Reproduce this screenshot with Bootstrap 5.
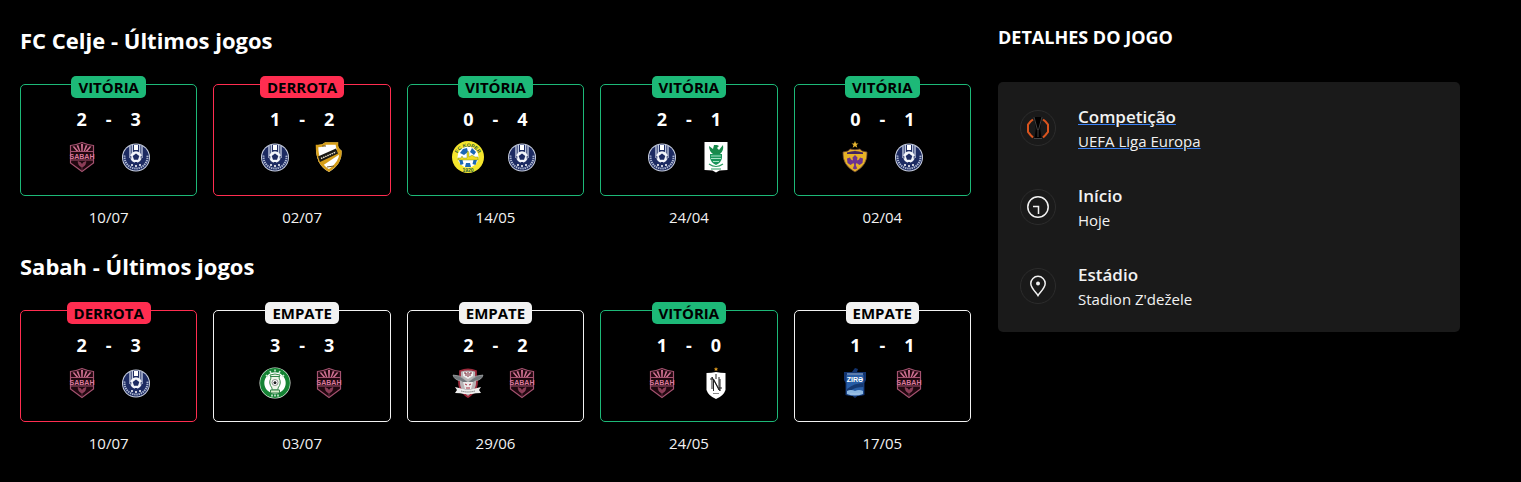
<!DOCTYPE html>
<html lang="pt" data-bs-theme="dark">
<head>
<meta charset="utf-8">
<meta name="viewport" content="width=device-width, initial-scale=1">
<title>FC Celje - Sabah</title>
<link href="https://cdn.jsdelivr.net/npm/bootstrap@5.3.0/dist/css/bootstrap.min.css" rel="stylesheet">
<style>
body{background:#000;color:#f2f2f2;font-family:"Open Sans","Noto Sans",sans-serif;font-size:15px;line-height:20px}
.page{display:grid;grid-template-columns:minmax(0,951fr) minmax(0,462fr);column-gap:27px;padding:24px 61px 24px 20px}
.form-title{font-size:22px;line-height:32px;font-weight:700;margin:0 0 20px}
.games{display:grid;grid-template-columns:repeat(5,minmax(0,1fr));column-gap:16px}
.game{--tone:#f2f2f2}
.win{--tone:#1db978}
.loss{--tone:#ff2d50}
.box{border:1px solid var(--tone);border-radius:5px;margin-top:8px;padding-bottom:22px}
.result{display:block;width:fit-content;margin:-9px auto 0;padding:0 7px;background:var(--tone);color:#000;border-radius:5px;font-size:15px;line-height:22px;font-weight:700}
.duel{display:grid;grid-template-columns:32px 22px 32px;justify-content:center}
.score{font-size:18px;line-height:24px;font-weight:700;color:#fff;margin:9px 0 10px}
.crest{width:32px;height:32px;display:block}
.crest:last-child{grid-column:3}
.date{margin-top:11px}
.form-block+.form-block{margin-top:23px}
.details-title{font-size:18px;line-height:26px;font-weight:700;margin:0 0 32px;color:#fff}
.details{background:#1a1a1a;border-radius:5px;padding:22px;display:grid;row-gap:31px}
.detail{gap:22px;color:inherit}
.ring{width:36px;height:36px;border:1px solid #2c2c2c;border-radius:50%;flex:none;display:grid;place-items:center}
.label{font-size:17px;line-height:26px;font-weight:600}
.value{font-size:15px;line-height:22px}
.under{text-decoration:underline;text-decoration-color:#3b82f6}
@media (max-width:900px){.page{grid-template-columns:1fr;padding-right:20px;row-gap:24px}.games{grid-template-columns:repeat(auto-fit,minmax(150px,1fr));row-gap:16px}}
</style>
</head>
<body>
<svg width="0" height="0" class="position-absolute" aria-hidden="true">
<defs>
<symbol id="sabah" viewBox="0 0 32 32">
<path d="M4.500 4.500Q10 4 16 1.500Q22 4 27.500 4.500V22L16 30.500L4.500 22Z" fill="#20070f" stroke="#a55270" stroke-width="1.200"/>
<path d="M15 3h2l-.3 7h-1.400zM10.500 4.500l1.800-.6 2 6.100h-1.300zM21.500 4.500l-1.800-.6-2 6.100h1.300zM6.500 5.500l1.800-.2 4 4.700h-2zM25.500 5.500l-1.800-.2-4 4.700h2z" fill="#cf7191"/>
<path d="M4.500 10.500h23M4.500 19h23" stroke="#a55270"/>
<text x="16" y="17.500" text-anchor="middle" font-family="Liberation Sans Narrow, Liberation Sans" font-weight="700" font-size="7" fill="#d9799b">SABAH</text>
<path d="M12 20.500l2.500 1 1.500 2 1.500-2 2.500-1-1 3.500-3 2.500-3-2.500zM15 28h2" fill="#8a3b55" stroke="#a55270" stroke-width=".5"/>
</symbol>
<symbol id="celje" viewBox="0 0 32 32">
<circle cx="16" cy="16.500" r="14" fill="#c7cedf"/><circle cx="16" cy="16.500" r="13" fill="#1d2b62"/>
<path d="M4.600 14.500A11.500 11.500 0 1 0 27.400 14.500" fill="none" stroke="#aeb8d2" stroke-width="2" stroke-dasharray="1.400 .8"/>
<path d="M10 5v12M12.300 4v9M19.700 4v9M22 5v12" stroke="#cbd3e6" stroke-width="1.300"/>
<path d="M14 4h4v5h-4z" fill="#fff"/>
<circle cx="16" cy="16" r="5.800" fill="#f3f5fa"/>
<path d="M16 12.500l3.300 2.400-1.300 3.800h-4l-1.300-3.800zM10 15l1.500.5-.5 3zM22 15l-1.500.5.5 3zM15 21h2v1.500h-2z" fill="#1d2b62"/>
<path d="M11 24h2M15 25h2M19 24h2" stroke="#fff" stroke-width="1.300"/>
</symbol>
<symbol id="cukaricki" viewBox="0 0 32 32">
<path d="M3 4Q9 4.500 12 1.500H25Q24 7 28.500 9.500Q29.500 23 16 31Q2 24 3 4Z" fill="#f3ecd5"/>
<path d="M4 5Q10 5.500 12.500 2.500H24Q23.500 8 27.500 10.500Q28 22 16 29.500Q4 23 4 5Z" fill="#fff" stroke="#d69e18" stroke-width="2.500"/>
<path d="M5 20L25 8l2 5L9 25z" fill="#d69e18"/>
<path d="M5 15.500L23 7.500l2 5L7 21z" fill="#191713"/>
<path d="M8 17.500l15-6.500" stroke="#e9e2d0" stroke-width="1.500" stroke-dasharray="1.500 .8"/>
<path d="M9 5h4M14 26l7-1" stroke="#665025"/>
</symbol>
<symbol id="koper" viewBox="0 0 32 32">
<circle cx="16" cy="16" r="16" fill="#f5e62d"/>
<circle cx="16" cy="16" r="10.500" fill="#fff"/>
<path d="M11 8l4-1 1 4-4 3-4-2zM20 7l4 4-2 3-4-3zM6.500 17l4 2 1 4-3 1zM25.500 17l-4 2-1 4 3 1zM14 22h4l1 4h-6z" fill="#1b67b5"/>
<path d="M6 19v-2h3l1-2 1 2h4v-5l1-2 1 2v4l3-2 3 2h3v3z" fill="#f2dc20" stroke="#57801d" stroke-width=".4"/>
<path id="kp" d="M4.800 17A11.200 11.200 0 0 1 27.200 17" fill="none"/>
<text font-family="Liberation Sans" font-size="5" font-weight="700" fill="#2c5c36"><textPath href="#kp" startOffset="50%" text-anchor="middle">FC KOPER</textPath></text>
<text x="16" y="30.500" text-anchor="middle" font-family="Liberation Sans" font-size="5" font-weight="700" fill="#235c41">1920</text>
</symbol>
<symbol id="olimpija" viewBox="0 0 32 32">
<path d="M4.500 1h23v28l-8 .5-3.500 2-3.500-2-8-.5z" fill="#fff"/>
<path d="M9 5l4 3 1-4h3l2 1-2 2 2 2 4-5q1 6-3 9h-7q-4-3-4-8z" fill="#178a4b"/>
<path d="M10 13h12v4q-1 5-6 7-5-2-6-7z" fill="#19955a"/>
<path d="M11 15h10M11 17.500h10M13 20.500h6" stroke="#b7ecd0" stroke-width=".9"/>
<path d="M9 23q7 5 14 0M11 28h10" fill="none" stroke="#2c9c61" stroke-width="1.200"/>
</symbol>
<symbol id="maribor" viewBox="0 0 32 32">
<path d="M16 0l1 2.500h2.500l-2 1.600.8 2.700-2.300-1.500-2.300 1.500.8-2.700-2-1.600H15z" fill="#e8b630"/>
<path d="M4 11q6-.5 7-3 5 1.500 10 0 1 2.500 7 3 1 13-12 20Q3 24 4 11z" fill="#e7b226" stroke="#6f4937" stroke-width=".8"/>
<path d="M8 11.500q8-3 16 0v1.500H8z" fill="#42245f"/>
<path d="M16 14l2.500 2.500-.5 3 2-1 1-2 3 1-.5 4.500-3 2-3-2-.8 2 1.500 3.500-2.200 1-2.200-1 1.500-3.500-.8-2-3 2-3-2-.5-4.500 3-1 1 2 2 1-.5-3z" fill="#6b3392"/>
</symbol>
<symbol id="paks" viewBox="0 0 32 32">
<circle cx="16" cy="16" r="15.500" fill="#e6f3e7"/><circle cx="16" cy="16" r="12.800" fill="#fff" stroke="#158334" stroke-width="4.200"/>
<path d="M7 8l2 2M11 4l1 2M16 2.500v2M21 4l-1 2M25 8l-2 2M13 29.500v-2M16 29.500v-2M19 29.500v-2" stroke="#d2ebd7" stroke-width="1.600"/>
<path d="M11 8q5-2 10 0l-1 3q3 5-1 10v2h-6v-2q-4-5-1-10z" fill="#eff6e9" stroke="#398c4d"/>
<path d="M12 9.500h8M11.500 23h9v3h-9z" fill="#d5ebc9" stroke="#34824a"/>
<circle cx="16" cy="15.500" r="3" fill="#fff" stroke="#666" stroke-width=".7"/><path d="M16 14l1.600 1.300-.6 1.700h-2l-.6-1.700z" fill="#222"/>
</symbol>
<symbol id="petrocub" viewBox="0 0 32 32">
<path d="M8 4q8-3 16 0v5q4 13-8 21Q4 22 8 9z" fill="#b8b4b6" stroke="#9d293b" stroke-width="1.800"/>
<path d="M1 8q7 0 11 4l4 3 4-3q4-4 11-4-1 5-8 6l-4 3h-6l-4-3Q2 13 1 8z" fill="#72777b" stroke="#b5b7b9" stroke-width=".6"/>
<path d="M11 5h10v4l-5 3-5-3z" fill="#eee"/><path d="M12 6h2v3M18 9V6h2M16 5v5" stroke="#7b2735" fill="none"/>
<path d="M11 15h10l-2 7h-6z" fill="#edeaea"/><path d="M13 17l2 1M19 17l-2 1M14 21h4" stroke="#a42d3f"/>
<path d="M3 20l8 2q5 2 10 0l8-2-2 3 2 3q-6 0-9 1h-8q-3-1-9-1l2-3z" fill="#eee"/><path d="M9 24q7 2 14 0" fill="none" stroke="#777" stroke-dasharray="1.500 .6"/>
</symbol>
<symbol id="neftchi" viewBox="0 0 32 32">
<path d="M16 0l.7 1.500h1.500l-1.200 1 .4 1.500-1.400-.8-1.400.8.4-1.500-1.200-1h1.500z" fill="#df9b20"/>
<path d="M6.500 6q5 0 9.500-1 4.500 1 9.500 1v17q-2 6-9.500 9-7.500-3-9.500-9z" fill="#fff"/>
<path d="M12 22V10l7 13V10M13.500 24V12l6.500 12V12M16 7v5M10 12h3M19 21h3" fill="none" stroke="#222"/>
<path d="M13 26.500h6" stroke="#888"/>
</symbol>
<symbol id="zira" viewBox="0 0 32 32">
<path d="M5 5h8l3-4 3 1-1 3h9v8l-1.500 3V28q-3 1-7 1l-2.500 2-2.500-2q-4 0-7-1V16L5 13z" fill="#12336e"/>
<path d="M7.500 8h17v19q-9 3-17 0z" fill="#285da6"/><path d="M8 22q7-6 16.500-6v4q-8 0-12 3l-4.500 1z" fill="#153871"/>
<path d="M8 24q4-2 8 0 4-2 8 0v3q-8 3-16 0z" fill="#8db8e2"/><path d="M8 7h16M11 27h10" stroke="#a9c6e6"/>
<text x="16" y="15" text-anchor="middle" font-family="Liberation Sans" font-size="7" font-weight="700" fill="#fff">ZIRƏ</text>
</symbol>
</defs>
</svg>

<main class="page">
<div>
<section class="form-block">
<h2 class="form-title">FC Celje - Últimos jogos</h2>
<div class="games">
<article class="game text-center win"><div class="box"><span class="result">VITÓRIA</span><div class="duel score"><span>2</span><span>-</span><span>3</span></div><div class="duel"><svg class="crest"><use href="#sabah"/></svg><svg class="crest"><use href="#celje"/></svg></div></div><div class="date">10/07</div></article>
<article class="game text-center loss"><div class="box"><span class="result">DERROTA</span><div class="duel score"><span>1</span><span>-</span><span>2</span></div><div class="duel"><svg class="crest"><use href="#celje"/></svg><svg class="crest"><use href="#cukaricki"/></svg></div></div><div class="date">02/07</div></article>
<article class="game text-center win"><div class="box"><span class="result">VITÓRIA</span><div class="duel score"><span>0</span><span>-</span><span>4</span></div><div class="duel"><svg class="crest"><use href="#koper"/></svg><svg class="crest"><use href="#celje"/></svg></div></div><div class="date">14/05</div></article>
<article class="game text-center win"><div class="box"><span class="result">VITÓRIA</span><div class="duel score"><span>2</span><span>-</span><span>1</span></div><div class="duel"><svg class="crest"><use href="#celje"/></svg><svg class="crest"><use href="#olimpija"/></svg></div></div><div class="date">24/04</div></article>
<article class="game text-center win"><div class="box"><span class="result">VITÓRIA</span><div class="duel score"><span>0</span><span>-</span><span>1</span></div><div class="duel"><svg class="crest"><use href="#maribor"/></svg><svg class="crest"><use href="#celje"/></svg></div></div><div class="date">02/04</div></article>
</div>
</section>
<section class="form-block">
<h2 class="form-title">Sabah - Últimos jogos</h2>
<div class="games">
<article class="game text-center loss"><div class="box"><span class="result">DERROTA</span><div class="duel score"><span>2</span><span>-</span><span>3</span></div><div class="duel"><svg class="crest"><use href="#sabah"/></svg><svg class="crest"><use href="#celje"/></svg></div></div><div class="date">10/07</div></article>
<article class="game text-center"><div class="box"><span class="result">EMPATE</span><div class="duel score"><span>3</span><span>-</span><span>3</span></div><div class="duel"><svg class="crest"><use href="#paks"/></svg><svg class="crest"><use href="#sabah"/></svg></div></div><div class="date">03/07</div></article>
<article class="game text-center"><div class="box"><span class="result">EMPATE</span><div class="duel score"><span>2</span><span>-</span><span>2</span></div><div class="duel"><svg class="crest"><use href="#petrocub"/></svg><svg class="crest"><use href="#sabah"/></svg></div></div><div class="date">29/06</div></article>
<article class="game text-center win"><div class="box"><span class="result">VITÓRIA</span><div class="duel score"><span>1</span><span>-</span><span>0</span></div><div class="duel"><svg class="crest"><use href="#sabah"/></svg><svg class="crest"><use href="#neftchi"/></svg></div></div><div class="date">24/05</div></article>
<article class="game text-center"><div class="box"><span class="result">EMPATE</span><div class="duel score"><span>1</span><span>-</span><span>1</span></div><div class="duel"><svg class="crest"><use href="#zira"/></svg><svg class="crest"><use href="#sabah"/></svg></div></div><div class="date">17/05</div></article>
</div>
</section>
</div>
<aside>
<h2 class="details-title">DETALHES DO JOGO</h2>
<div class="details">
<a class="detail d-flex align-items-center text-decoration-none" href="#">
<span class="ring"><svg width="24" height="24" viewBox="0 0 24 24" fill="none"><path d="M7 3.500L4.500 5.500 2 8.500v7.500L4.500 19 7 21.500M17 3.500l2.500 2L22 8.500v7.500L19.500 19 17 21.500" stroke="#d9541e" stroke-width="2"/><path d="M8 1h8l-1.800 12 1.300 9h-7l1.300-9z" fill="#000"/><path d="M8 1l3.500 13M16 1l-3.500 13M12 14v7M8 22.500h8" stroke="#505050" stroke-width=".8"/></svg></span>
<span><span class="label d-block under">Competição</span><span class="value d-block under">UEFA Liga Europa</span></span>
</a>
<div class="detail d-flex align-items-center">
<span class="ring"><svg width="24" height="24" viewBox="0 0 24 24" fill="none" stroke="#f2f2f2" stroke-width="1.500"><circle cx="12" cy="12" r="10.200"/><path d="M7 11.500h5.500V19"/></svg></span>
<span><span class="label d-block">Início</span><span class="value d-block">Hoje</span></span>
</div>
<div class="detail d-flex align-items-center">
<span class="ring"><svg width="24" height="24" viewBox="0 0 24 24"><path d="M12 21.500C10.500 19 4.800 14 4.800 9.500a7.200 7.200 0 0 1 14.400 0C19.200 14 13.500 19 12 21.500z" fill="none" stroke="#f2f2f2" stroke-width="1.500"/><circle cx="12" cy="9.500" r="2" fill="#f2f2f2"/></svg></span>
<span><span class="label d-block">Estádio</span><span class="value d-block">Stadion Z'dežele</span></span>
</div>
</div>
</aside>
</main>
<script src="https://cdn.jsdelivr.net/npm/bootstrap@5.3.0/dist/js/bootstrap.bundle.min.js"></script>
</body>
</html>
